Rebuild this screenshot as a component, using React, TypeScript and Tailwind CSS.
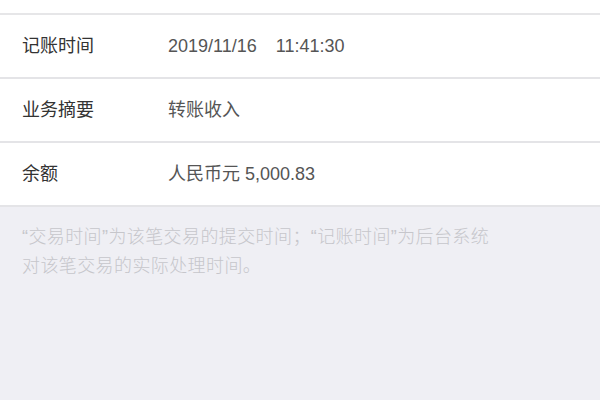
const font = { fontFamily: '"Liberation Sans", "Noto Sans CJK SC", sans-serif' }

const rows = [
    { label: '记账时间', value: <><span>2019/11/16</span><span className="ml-[19px]">11:41:30</span></> },
    { label: '业务摘要', value: '转账收入' },
    { label: '余额', value: '人民币元 5,000.83' },
]

export default function App() {
    return (
        <div className="w-[600px] h-[400px] bg-[#efeff4] overflow-hidden" style={font}>
            <div className="h-[13px] bg-white border-b-2 border-[#e6e6e8] box-content" />
            {rows.map(row => (
                <div key={row.label} className="h-[62px] box-content bg-white border-b-2 border-[#e4e4e7] flex items-center text-[18px]">
                    <div className="w-[168px] pl-[22px] text-[#333333]">{row.label}</div>
                    <div className="text-[#555555] flex">{row.value}</div>
                </div>
            ))}
            <p className="ml-[22px] w-[472px] pt-[16px] text-[18px] leading-[29px] tracking-[0.4px] text-[#c6c6cb] font-light">
                “交易时间”为该笔交易的提交时间；“记账时间”为后台系统对该笔交易的实际处理时间。
            </p>
        </div>
    )
}
